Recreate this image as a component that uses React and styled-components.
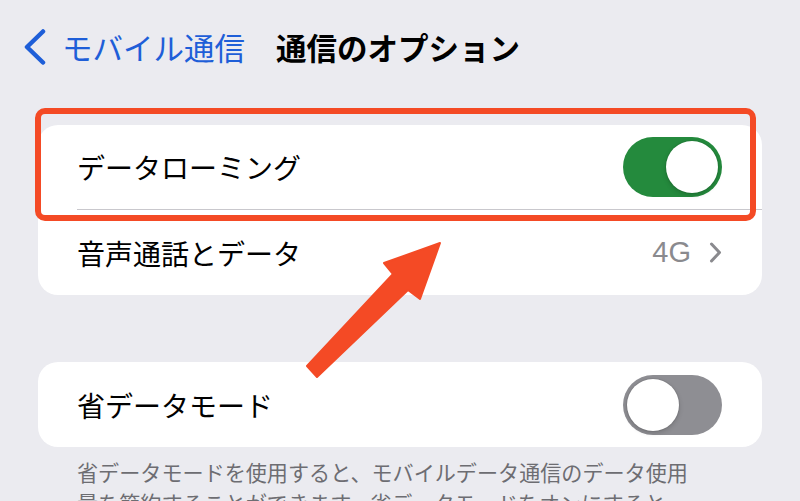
import styled, { createGlobalStyle } from "styled-components";

const GlobalStyle = createGlobalStyle`
  html, body {
    margin: 0;
    padding: 0;
    background: #ebebf0;
  }
  body {
    font-family: "Noto Sans CJK JP", "Noto Sans", sans-serif;
    -webkit-font-smoothing: antialiased;
  }
`;

const Page = styled.div`
  position: relative;
  width: 800px;
  height: 501px;
  overflow: hidden;
  background: #ebebf0;
`;

const NavBar = styled.div`
  display: flex;
  align-items: center;
  height: 94px;
  padding: 0 0 0 24px;
`;

const BackButton = styled.div`
  display: flex;
  align-items: center;
  gap: 16px;
  color: #1e5ed8;
  font-size: 30.5px;
  line-height: 1;
`;

const Title = styled.div`
  margin-left: 31px;
  font-size: 30.5px;
  font-weight: 700;
  color: #000;
  line-height: 1;
`;

const Content = styled.div`
  padding: 31px 38px 0;
`;

const Card = styled.div`
  position: relative;
  background: #fff;
  border-radius: 20px;
  margin-top: ${(p) => p.$gap || 0}px;
`;

const Row = styled.div`
  display: flex;
  align-items: center;
  justify-content: space-between;
  height: ${(p) => p.$height || 85}px;
  padding: 0 40px 0 39px;
`;

const Label = styled.span`
  font-size: 28px;
  color: #000;
  line-height: 1;
`;

const Divider = styled.div`
  height: 1px;
  margin-left: 39px;
  background: #c9c8cd;
`;

const Detail = styled.div`
  display: flex;
  align-items: center;
  gap: 18px;
  color: #8a8a8e;
  font-family: "Liberation Sans", Arial, sans-serif;
  font-size: 29px;
  line-height: 1;
`;

const Track = styled.div`
  position: relative;
  width: 99px;
  height: 60px;
  border-radius: 30px;
  background: ${(p) => (p.$on ? "#248a3d" : "#8e8e93")};
`;

const Knob = styled.div`
  position: absolute;
  top: 4px;
  left: ${(p) => (p.$on ? 43 : 4)}px;
  width: 52px;
  height: 52px;
  border-radius: 50%;
  background: #fff;
  box-shadow: 0 0 0 1px rgba(0, 0, 0, 0.06), 0 2px 5px rgba(0, 0, 0, 0.18);
`;

const Highlight = styled.div`
  position: absolute;
  left: -3px;
  top: -17px;
  width: 721px;
  height: 113px;
  box-sizing: border-box;
  border: 6px solid #f44a25;
  border-radius: 10px;
  pointer-events: none;
`;

const Footnote = styled.p`
  margin: 0;
  padding: 10px 0 0 77px;
  width: 620px;
  font-size: 21.1px;
  line-height: 31px;
  color: #6d6d72;
`;

const Arrow = styled.svg`
  position: absolute;
  left: 300px;
  top: 236px;
  width: 150px;
  height: 150px;
  pointer-events: none;
`;

function Toggle({ on }) {
  return (
    <Track $on={on}>
      <Knob $on={on} />
    </Track>
  );
}

function App() {
  return (
    <Page>
      <GlobalStyle />
      <NavBar>
        <BackButton>
          <svg width="22" height="36" viewBox="0 0 22 36">
            <path
              d="M19 2.5 L3 18 L19 33.5"
              fill="none"
              stroke="#1e5ed8"
              strokeWidth="4.5"
              strokeLinecap="round"
              strokeLinejoin="round"
            />
          </svg>
          <span>モバイル通信</span>
        </BackButton>
        <Title>通信のオプション</Title>
      </NavBar>

      <Content>
        <Card>
          <Row $height={84}>
            <Label>データローミング</Label>
            <Toggle on />
          </Row>
          <Divider />
          <Row>
            <Label>音声通話とデータ</Label>
            <Detail>
              4G
              <svg width="13" height="21" viewBox="0 0 13 21">
                <path
                  d="M2.5 2 L10.5 10.5 L2.5 19"
                  fill="none"
                  stroke="#8a8a8e"
                  strokeWidth="3"
                  strokeLinecap="round"
                  strokeLinejoin="round"
                />
              </svg>
            </Detail>
          </Row>
          <Highlight />
        </Card>

        <Card $gap={67}>
          <Row>
            <Label>省データモード</Label>
            <Toggle />
          </Row>
        </Card>
      </Content>

      <Footnote>
        省データモードを使用すると、モバイルデータ通信のデータ使用量を節約することができます。省データモードをオンにすると、自動アップデートやバックグラウンドタスクが一時停止されます。
      </Footnote>

      <Arrow viewBox="300 236 150 150">
        <polygon
          points="307,366 393,274 384,263 440,243 420,299 408,290 317,377"
          fill="#f44a25"
          stroke="#f44a25"
          strokeWidth="2"
          strokeLinejoin="round"
        />
      </Arrow>
    </Page>
  );
}

export default App;
